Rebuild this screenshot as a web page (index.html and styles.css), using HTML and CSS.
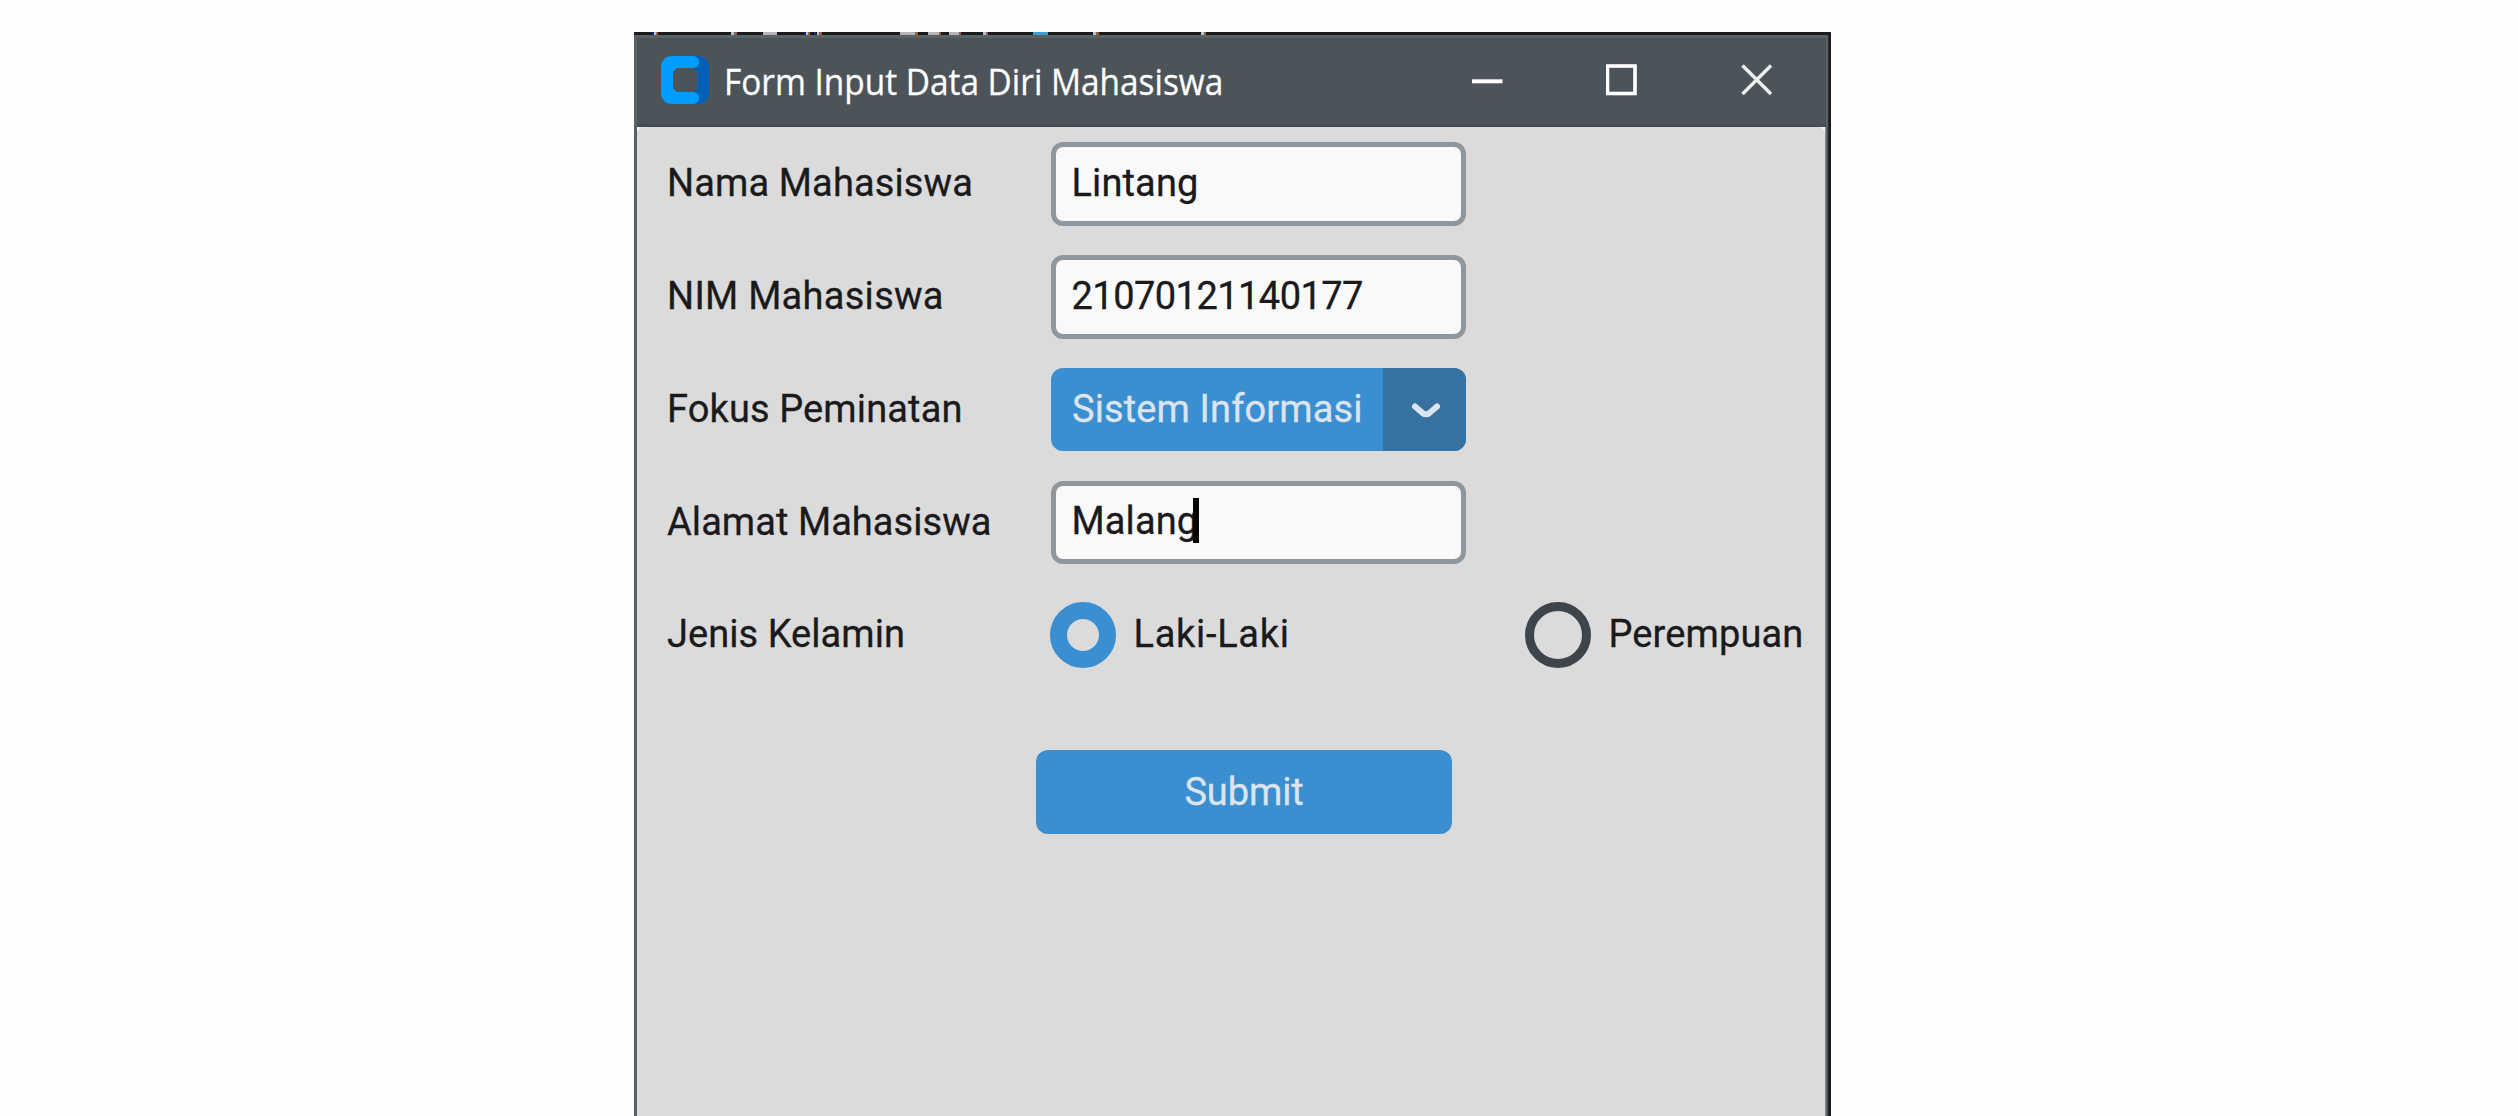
FILE: index.html
```html
<!DOCTYPE html>
<html lang="id">
<head>
<meta charset="utf-8">
<title>Form Input Data Diri Mahasiswa</title>
<link rel="stylesheet" href="styles.css">
</head>
<body>
<div class="desktop">
  <svg class="backdrop-strip" width="1197" height="3" viewBox="0 0 1197 3" aria-hidden="true">
    <rect width="1197" height="3" fill="#1b1c1d"/>
    <path d="M18 1.5h2M170 1.5h2M180 1.5h2" stroke="#1a237c" stroke-width="3"/>
    <path d="M20 1.5h2M97 1.5h3M172 1.5h2M183 1.5h2M349 1.5h3M459 1.5h3M567 1.5h3" stroke="#a9c4dc" stroke-width="3"/>
    <path d="M22 1.5h2M100 1.5h3M174 1.5h2M185 1.5h3M281 1.5h3M304 1.5h3M325 1.5h2M352 1.5h2M462 1.5h3M570 1.5h2" stroke="#9c5d3a" stroke-width="3"/>
    <path d="M129 1.5h14M266 1.5h15M294 1.5h11M315 1.5h10" stroke="#b3b5b8" stroke-width="3"/>
    <path d="M399 1.5h15" stroke="#3f9fc9" stroke-width="3"/>
  </svg>
  <main class="window">
    <header class="titlebar">
      <svg class="logo" width="48" height="48" viewBox="0 0 48 48" aria-hidden="true">
        <path fill="#0060b5" d="M30 0h6q12 0 12 12v24q0 12-12 12h-6V36h3l3-3V15l-3-3h-3z"/>
        <path fill="#009dff" d="M12 0h20a6 6 0 0 1 0 12H16l-4 4v16l4 4h16a6 6 0 0 1 0 12H12Q0 48 0 36V12Q0 0 12 0z"/>
      </svg>
      <h1 class="title">Form Input Data Diri Mahasiswa</h1>
      <nav class="controls">
        <svg width="32" height="32" viewBox="0 0 32 32"><path d="M1 17.3h30.5" stroke="#fff" stroke-width="4"/></svg>
        <svg width="32" height="32" viewBox="0 0 32 32"><rect x="1.5" y="2" width="27.5" height="27.5" fill="none" stroke="#fff" stroke-width="3.6"/></svg>
        <svg width="32" height="32" viewBox="0 0 32 32"><path d="M1.5 1.5 30 30M30 1.5 1.5 30" stroke="#eef0f0" stroke-width="3.4"/></svg>
      </nav>
    </header>
    <form class="form">
      <span class="label">Nama Mahasiswa</span>
      <span class="field">Lintang</span>
      <span class="label nim">NIM Mahasiswa</span>
      <span class="field digits">21070121140177</span>
      <span class="label">Fokus Peminatan</span>
      <span class="select">
        <span class="select-value">Sistem Informasi</span>
        <span class="select-arrow"><svg width="28" height="18" viewBox="0 0 28 18"><path d="M3 4.5 10.5 11q3.5 2.5 7 0L25 4.5" fill="none" stroke="#dce4ee" stroke-width="6" stroke-linecap="round"/></svg></span>
      </span>
      <span class="label alamat">Alamat Mahasiswa</span>
      <span class="field">Malang<i class="caret"></i></span>
      <span class="label jenis">Jenis Kelamin</span>
      <span class="option"><i class="radio checked"></i><span class="laki">Laki-Laki</span></span>
      <span class="option"><i class="radio"></i><span>Perempuan</span></span>
      <button class="submit" type="button">Submit</button>
    </form>
  </main>
</div>
</body>
</html>
```
FILE: styles.css
```css
* { box-sizing: border-box; }

body {
  margin: 0;
  background: #fefefe;
  font-family: Roboto, "Liberation Sans", sans-serif;
  font-size: 38px;
  letter-spacing: 0.12px;
  color: #1a1a1c;
  -webkit-text-stroke: 0.3px;
}

.desktop {
  width: 1197px;
  height: 1116px;
  margin-left: 634px;
  padding-top: 32px;
  overflow: hidden;
  display: flex;
  flex-direction: column;
}

.backdrop-strip { display: block; flex: none; }

.window {
  flex: 1;
  display: flex;
  flex-direction: column;
  background: linear-gradient(to right, #566266 3px, #e4e4e4 3px, #dbdbdb 5px, #dbdbdb 1189px, #e0e0e0 1190px, #82898d 1191.5px, #536065 1193px, #1a1c1d 1195px);
}

.titlebar {
  height: 92px;
  flex: none;
  margin-right: 3px;
  padding: 0 53px 0 24px;
  border: solid #596366;
  border-width: 3px 2px 0 3px;
  display: flex;
  align-items: flex-start;
  background: linear-gradient(#4c5459 85px, #404c54 88px);
}

.logo { margin-top: 18px; flex: none; }

.title {
  margin: 17.5px 0 0 14.5px;
  font: 400 37px/50px "Open Sans", "Noto Sans", sans-serif;
  letter-spacing: 0;
  color: #fff;
  white-space: nowrap;
  transform: scaleX(0.902);
  transform-origin: left;
}

.controls {
  margin: 26px 0 0 auto;
  display: flex;
  gap: 103px;
}

.form {
  flex: 1;
  margin: 0 6px 0 3px;
  padding: 15.3px 0 0 30px;
  display: grid;
  grid-template-columns: 383.5px 475px 1fr;
  grid-auto-rows: 83.5px;
  row-gap: 29.3px;
  align-content: start;
  background:
    radial-gradient(circle at 8px 8px, #dbdbdb 8px, #f4f4f4 9px) 0 0 / 8px 8px no-repeat,
    radial-gradient(circle at 0 8px, #dbdbdb 8px, #f4f4f4 9px) 100% 0 / 8px 8px no-repeat,
    #dbdbdb;
}

.label {
  grid-column: 1;
  line-height: 82px;
  white-space: nowrap;
}

.nim { letter-spacing: 0.28px; }
.alamat, .jenis { letter-spacing: 0.05px; }

.field {
  display: flex;
  align-items: center;
  width: 415.5px;
  padding: 0 0 2.5px 16px;
  border: 5px solid #90979c;
  border-radius: 12px;
  background: #f9f9fa;
}

.digits { letter-spacing: -0.54px; }

.caret {
  width: 6px;
  height: 44.5px;
  margin: -1px 0 0 -5px;
  background: #050505;
}

.select {
  display: flex;
  width: 415.5px;
  border-radius: 12px;
  overflow: hidden;
  background: #3b8ed0;
  color: #dce4ee;
}

.select-value {
  width: 332.5px;
  padding-left: 21.5px;
  line-height: 82px;
  white-space: nowrap;
}

.select-arrow {
  flex: 1;
  padding: 2px 0 0 2px;
  display: flex;
  align-items: center;
  justify-content: center;
  background: #36719f;
}

.option {
  display: flex;
  align-items: center;
  line-height: 82px;
  gap: 17.5px;
  margin-left: -0.5px;
}

.option > span { margin-top: -1.5px; }

.laki { letter-spacing: 0.7px; }

.radio {
  width: 66px;
  height: 66px;
  border: 9px solid #3e454a;
  border-radius: 50%;
}

.radio.checked { border: 17.5px solid #3b8ed0; }

.submit {
  grid-column: 2;
  width: 416px;
  height: 83.5px;
  margin: 44.2px 0 0 -15px;
  padding: 0 0 1px 1px;
  border: 0;
  border-radius: 12px;
  background: #3b8ed0;
  color: #dce4ee;
  font: inherit;
  letter-spacing: -0.1px;
}
```
